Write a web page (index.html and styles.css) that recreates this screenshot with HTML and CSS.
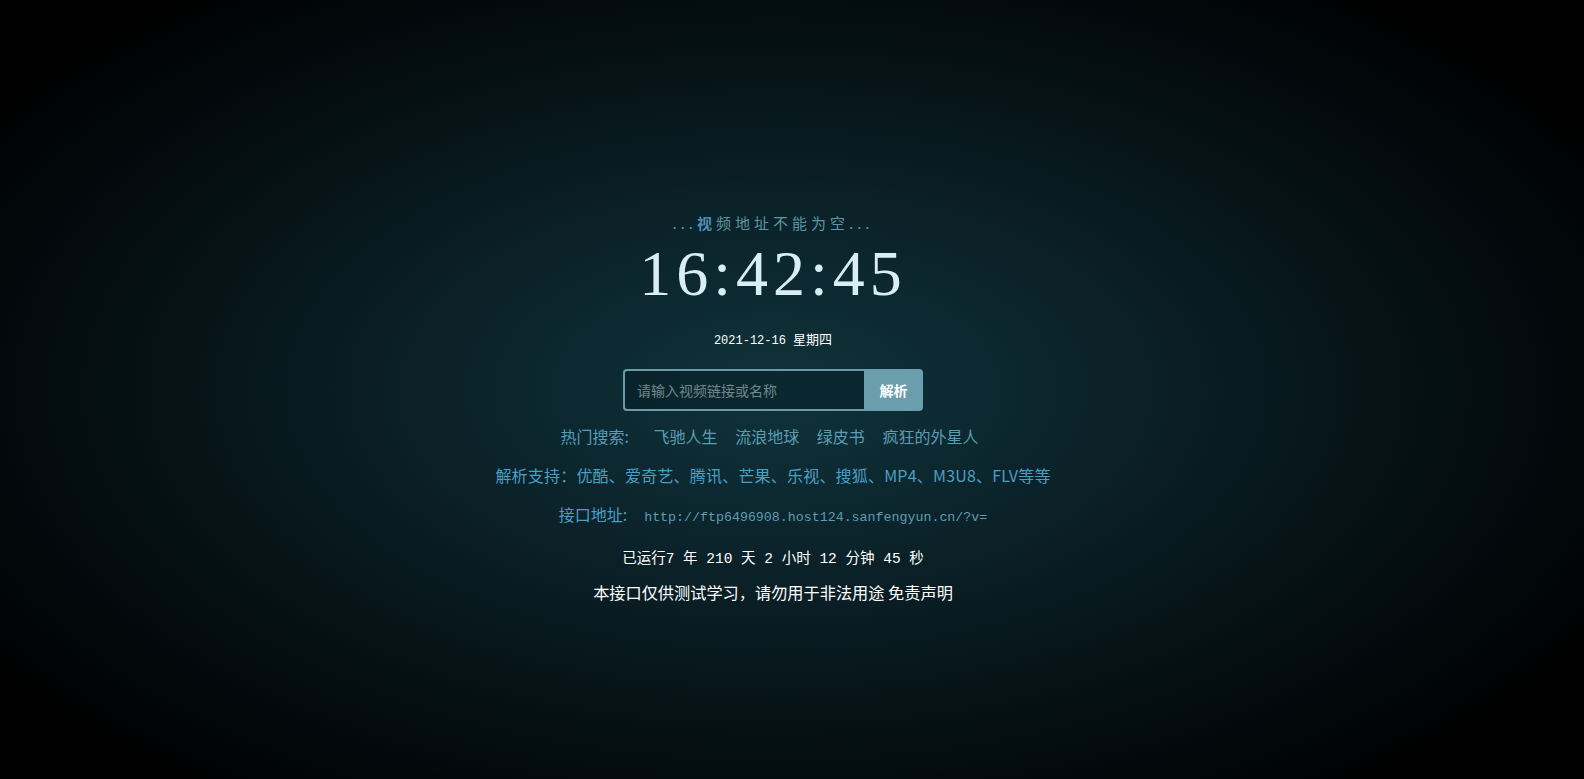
FILE: index.html
```html
<!DOCTYPE html>
<html lang="zh">
<head>
<meta charset="utf-8">
<title>视频解析</title>
<link rel="stylesheet" href="styles.css">
</head>
<body>
<main class="page">
  <div class="tip"><span class="dots">...</span><span class="hl">视</span>频地址不能为空<span class="dots">...</span></div>
  <div class="clock">16:42:45</div>
  <div class="date">2021-12-16 <span class="cjk">星期四</span></div>
  <form class="search">
    <input class="search-input" type="text" placeholder="请输入视频链接或名称">
    <button class="search-btn" type="button">解析</button>
  </form>
  <div class="row hot">
    <span class="label">热门搜索:</span>
    <a class="hot-link">飞驰人生</a>
    <a class="hot-link">流浪地球</a>
    <a class="hot-link">绿皮书</a>
    <a class="hot-link">疯狂的外星人</a>
  </div>
  <div class="row support">解析支持：优酷、爱奇艺、腾讯、芒果、乐视、搜狐、MP4、M3U8、FLV等等</div>
  <div class="row api"><span class="label">接口地址:</span><span class="url">http://ftp6496908.host124.sanfengyun.cn/?v=</span></div>
  <div class="row run">已运行7 年 210 天 2 小时 12 分钟 45 秒</div>
  <div class="row note">本接口仅供测试学习，请勿用于非法用途 免责声明</div>
</main>
</body>
</html>
```
FILE: styles.css
```css
html, body {
  margin: 0;
  height: 100%;
}
body {
  background: radial-gradient(ellipse 60% 65% at 49% 50%, #10333b 0%, #0a1f26 40%, #02080a 85%, #000 100%);
  font-family: "Noto Sans CJK SC", "Noto Sans", sans-serif;
  color: #fff;
  overflow: hidden;
}
.page {
  display: flex;
  flex-direction: column;
  align-items: center;
  padding-top: 211px;
  padding-right: 38px;
}
.tip {
  font-size: 15px;
  letter-spacing: 4px;
  color: #5c95a5;
  line-height: 24px;
}
.tip .hl {
  color: #4d8fb0;
  font-weight: bold;
}
.clock {
  font-family: "Liberation Serif", serif;
  font-size: 64px;
  letter-spacing: 5px;
  color: #d8eef4;
  line-height: 70px;
  margin-top: 4px;
}
.date {
  font-family: "Liberation Mono", "Noto Sans CJK SC", monospace;
  font-size: 12px;
  color: #fff;
  margin-top: 21px;
  line-height: 18px;
}
.date .cjk {
  font-family: "Noto Sans CJK SC", sans-serif;
  font-size: 13px;
}
.search {
  display: flex;
  margin-top: 19px;
  width: 300px;
  height: 42px;
}
.search-input {
  flex: 1;
  min-width: 0;
  box-sizing: border-box;
  height: 42px;
  border: 2px solid #6a9aa6;
  border-right: none;
  border-radius: 4px 0 0 4px;
  background: rgba(0, 20, 28, 0.35);
  padding: 0 12px;
  font-family: "Noto Sans CJK SC", sans-serif;
  font-size: 14px;
  color: #fff;
  outline: none;
}
.search-input::placeholder {
  color: #72878c;
}
.search-btn {
  width: 59px;
  height: 42px;
  border: none;
  border-radius: 0 4px 4px 0;
  background: #6a9ead;
  color: #fff;
  font-family: "Noto Sans CJK SC", sans-serif;
  font-size: 14px;
  font-weight: bold;
  padding: 0;
}
.row {
  font-size: 16px;
  line-height: 24px;
  margin-top: 15px;
}
.hot {
  margin-top: 13px;
  color: #4f9fbf;
}
.hot .label {
  margin-right: 14px;
}
.hot-link {
  color: #5a9db5;
  margin: 0 7px;
}
.support {
  color: #4a9fc4;
  letter-spacing: 0.2px;
}
.api .label {
  color: #4a9fc4;
  margin-right: 17px;
}
.api .url {
  font-family: "Liberation Mono", monospace;
  font-size: 13.3px;
  color: #5f9cb2;
}
.run {
  font-family: "Liberation Mono", "Noto Sans CJK SC", monospace;
  font-size: 14.5px;
  color: #fff;
  margin-top: 17px;
}
.note {
  color: #fff;
  margin-top: 9px;
  font-size: 16.2px;
}
```
